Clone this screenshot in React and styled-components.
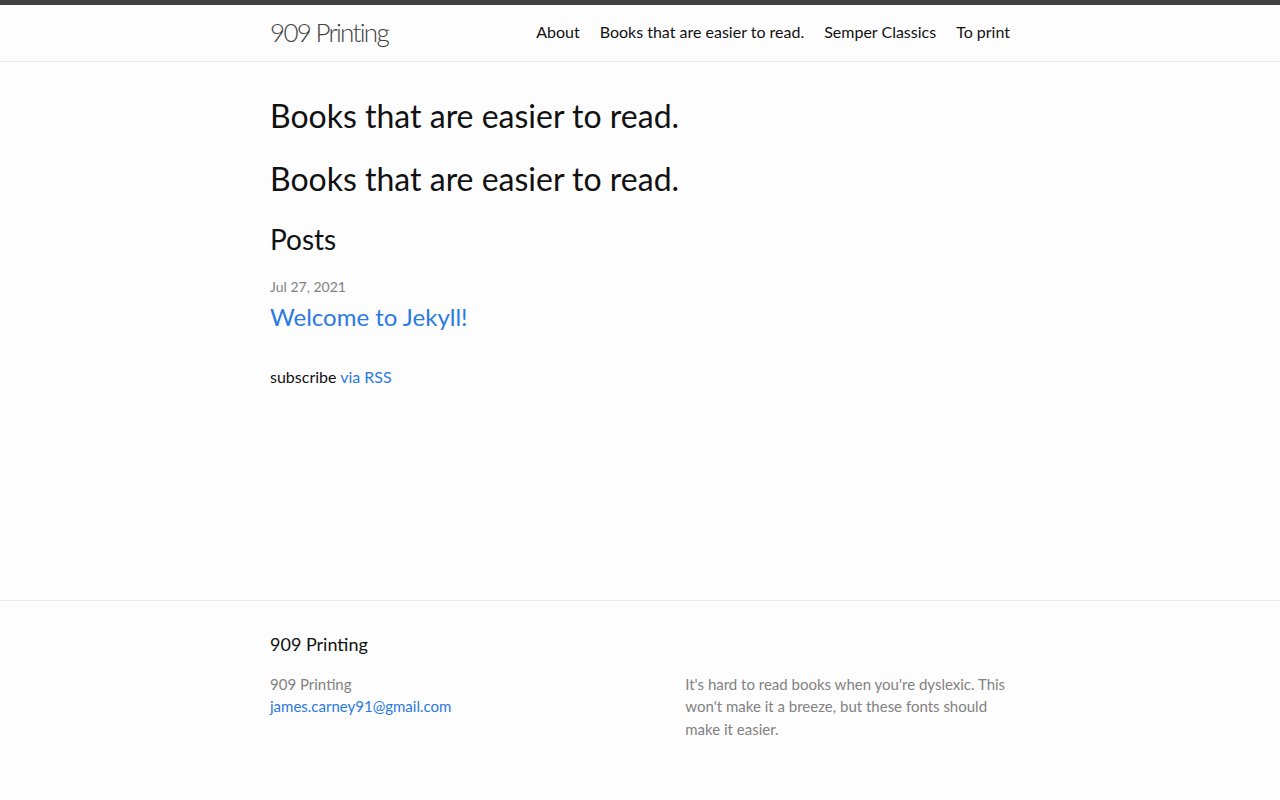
import React from "react";
import styled, { createGlobalStyle } from "styled-components";

const Global = createGlobalStyle`
  html, body { margin: 0; padding: 0; }
  body {
    font-family: Lato, "Noto Sans", sans-serif;
    font-size: 16px;
    line-height: 1.5;
    color: #111111;
    background: #fdfdfd;
  }
`;

const Page = styled.div`
  min-height: 100vh;
  display: flex;
  flex-direction: column;
`;

const Wrapper = styled.div`
  max-width: 740px;
  margin: 0 auto;
  padding: 0 30px;
`;

const Header = styled.header`
  border-top: 5px solid #424242;
  border-bottom: 1px solid #e8e8e8;
  min-height: 55.95px;
`;

const HeaderInner = styled(Wrapper)`
  display: flex;
  justify-content: space-between;
  align-items: center;
`;

const SiteTitle = styled.a`
  font-size: 26px;
  font-weight: 300;
  line-height: 54px;
  letter-spacing: -1.7px;
  color: #424242;
  text-decoration: none;
`;

const Nav = styled.nav`
  display: flex;
  gap: 20px;
  line-height: 54px;
`;

const NavLink = styled.a`
  color: #111111;
  text-decoration: none;
  font-size: 16px;
`;

const Main = styled.main`
  flex: 1;
  padding: 30px 0;
`;

const Heading = styled.h1`
  font-size: 32px;
  font-weight: 400;
  line-height: 1.5;
  margin: 0 0 15px;
`;

const ListHeading = styled.h2`
  font-size: 28px;
  font-weight: 400;
  line-height: 1.5;
  margin: 0 0 15px;
`;

const PostList = styled.ul`
  list-style: none;
  margin: 0;
  padding: 0;
`;

const PostItem = styled.li`
  margin-bottom: 30px;
`;

const PostMeta = styled.span`
  display: block;
  font-size: 14px;
  color: #828282;
  line-height: 24px;
`;

const PostTitle = styled.h3`
  margin: 0;
  font-weight: 400;
  font-size: 24px;
  line-height: 1.5;
`;

const Link = styled.a`
  color: #2a7ae2;
  text-decoration: none;
`;

const Rss = styled.p`
  margin: 0 0 15px;
`;

const Footer = styled.footer`
  border-top: 1px solid #e8e8e8;
  padding: 30px 0;
`;

const FooterHeading = styled.h2`
  font-size: 18px;
  font-weight: 400;
  line-height: 1.5;
  margin: 0 0 15px;
`;

const FooterCols = styled.div`
  display: flex;
  margin-left: -15px;
  font-size: 15px;
  color: #828282;
  line-height: 1.5;
`;

const FooterCol = styled.div`
  box-sizing: content-box;
  width: ${(p) => p.$w};
  padding-left: 15px;
  margin-bottom: 15px;
`;

const ContactList = styled.ul`
  list-style: none;
  margin: 0 0 15px;
  padding: 0;
`;

const FooterText = styled.p`
  margin: 0 0 15px;
`;

export default function App() {
  return (
    <>
      <Global />
      <Page>
        <Header>
          <HeaderInner>
            <SiteTitle href="#">909 Printing</SiteTitle>
            <Nav>
              <NavLink href="#">About</NavLink>
              <NavLink href="#">Books that are easier to read.</NavLink>
              <NavLink href="#">Semper Classics</NavLink>
              <NavLink href="#">To print</NavLink>
            </Nav>
          </HeaderInner>
        </Header>
        <Main>
          <Wrapper>
            <Heading>Books that are easier to read.</Heading>
            <Heading>Books that are easier to read.</Heading>
            <ListHeading>Posts</ListHeading>
            <PostList>
              <PostItem>
                <PostMeta>Jul 27, 2021</PostMeta>
                <PostTitle>
                  <Link href="#">Welcome to Jekyll!</Link>
                </PostTitle>
              </PostItem>
            </PostList>
            <Rss>
              subscribe <Link href="#">via RSS</Link>
            </Rss>
          </Wrapper>
        </Main>
        <Footer>
          <Wrapper>
            <FooterHeading>909 Printing</FooterHeading>
            <FooterCols>
              <FooterCol $w="calc(35% - 15px)">
                <ContactList>
                  <li>909 Printing</li>
                  <li>
                    <Link href="#">james.carney91@gmail.com</Link>
                  </li>
                </ContactList>
              </FooterCol>
              <FooterCol $w="calc(20% - 15px)" />
              <FooterCol $w="calc(45% - 15px)">
                <FooterText>
                  It's hard to read books when you're dyslexic. This won't make it a breeze, but these fonts should make it easier.
                </FooterText>
              </FooterCol>
            </FooterCols>
          </Wrapper>
        </Footer>
      </Page>
    </>
  );
}
